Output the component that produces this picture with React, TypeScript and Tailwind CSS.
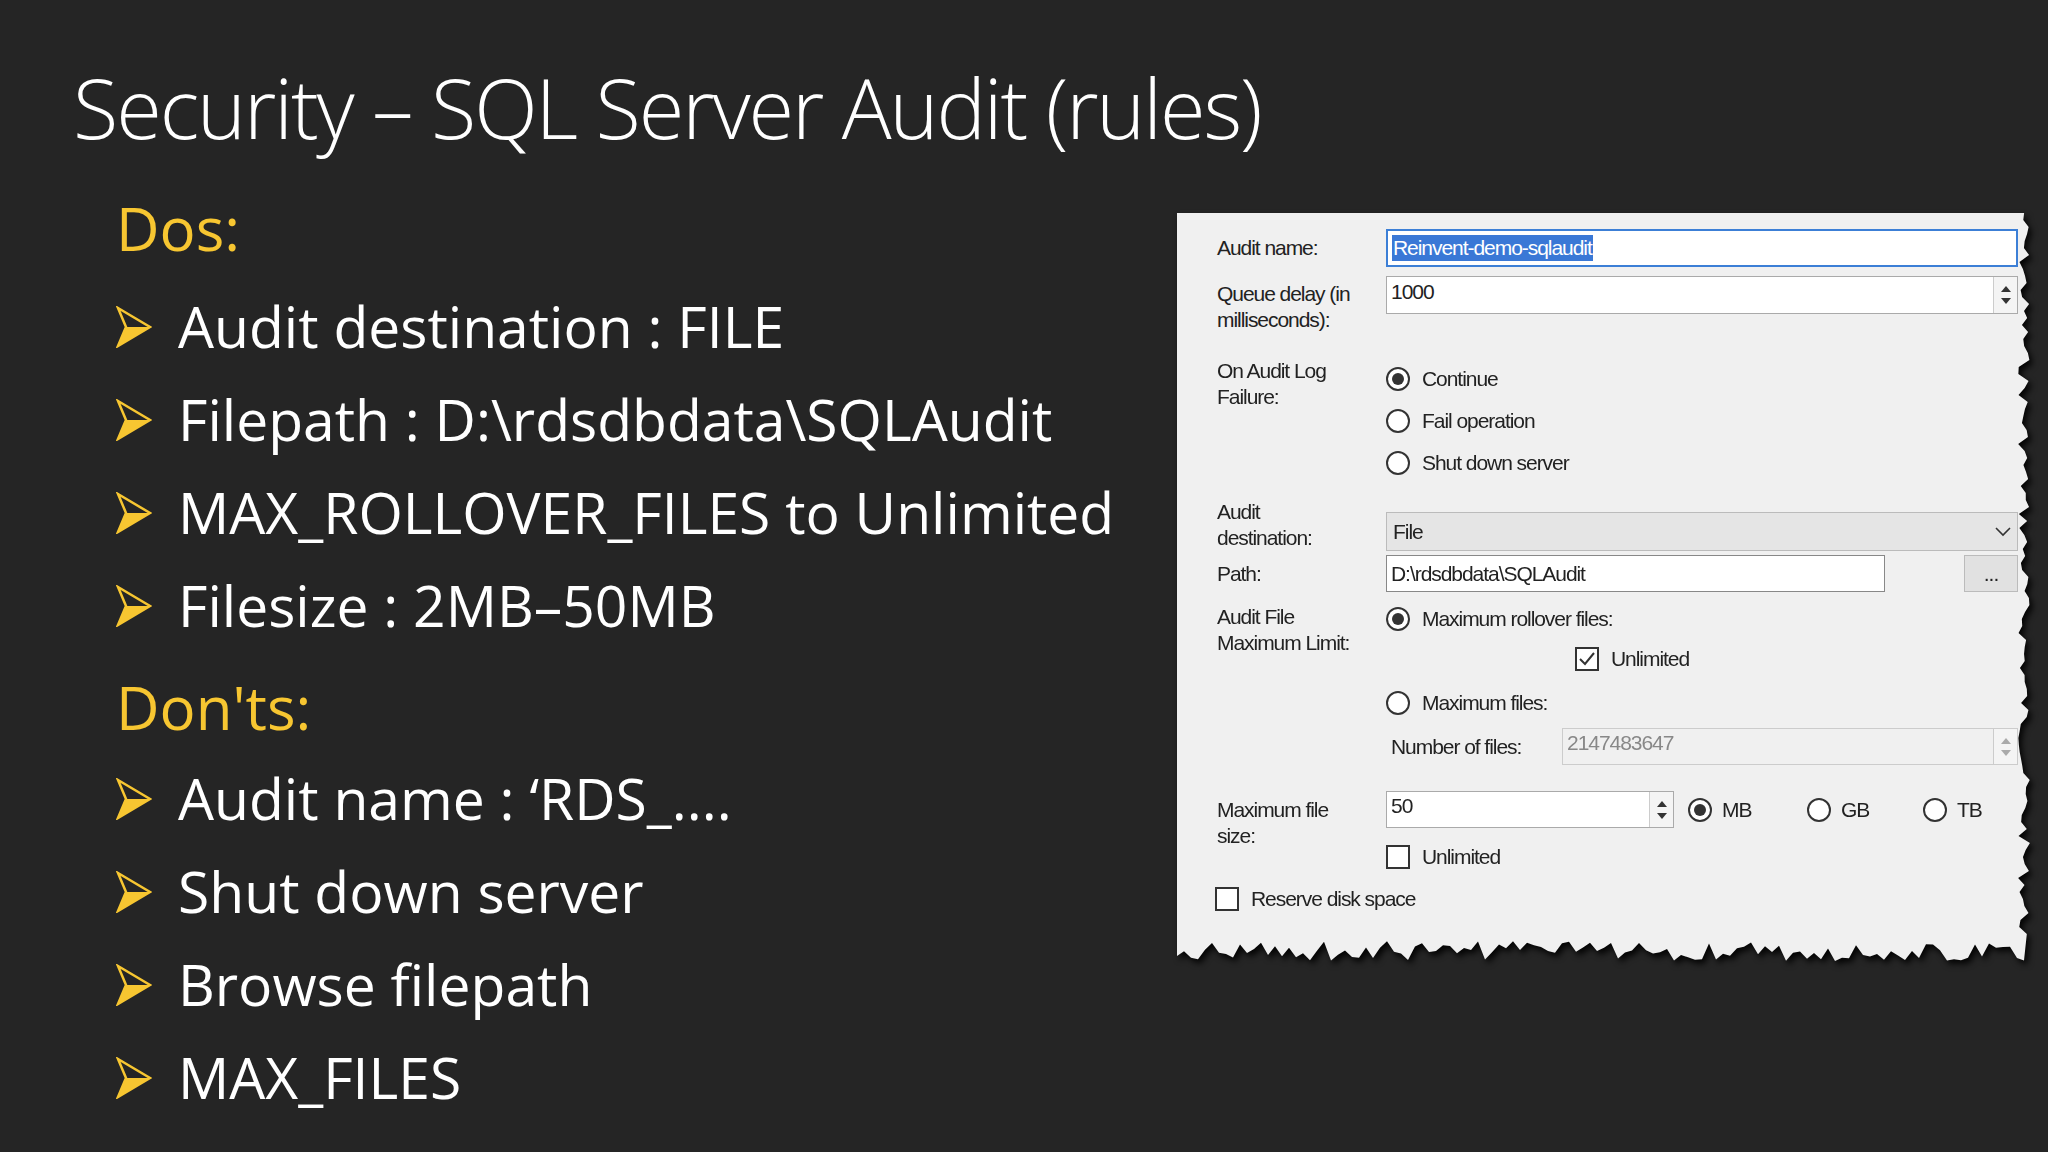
import React from "react";

const YELLOW = "#f7c631";

function Arrow() {
  return (
    <svg width="36" height="42" viewBox="0 0 36 42" className="shrink-0">
      <path d="M2 2 L34 21 L2 40 L10 21 Z" fill="none" stroke={YELLOW} strokeWidth="2.5" strokeLinejoin="miter" />
      <path d="M10 21 L34 21 L2 40 Z" fill={YELLOW} />
    </svg>
  );
}

function Bullet({ text }: { text: string }) {
  return (
    <div className="flex items-center h-[93px] gap-[26px]">
      <Arrow />
      <span className="text-[57px] text-white leading-none">{text}</span>
    </div>
  );
}

function Radio({ on }: { on?: boolean }) {
  return (
    <span className="w-[24px] h-[24px] rounded-full border-[2px] border-[#333] bg-white flex items-center justify-center shrink-0">
      {on && <span className="w-[12px] h-[12px] rounded-full bg-[#333]" />}
    </span>
  );
}

function Check({ on }: { on?: boolean }) {
  return (
    <span className="w-[24px] h-[24px] border-[2px] border-[#333] bg-white flex items-center justify-center shrink-0">
      {on && (
        <svg width="18" height="18" viewBox="0 0 18 18">
          <path d="M2 9 L7 14 L16 3" fill="none" stroke="#333" strokeWidth="2" />
        </svg>
      )}
    </span>
  );
}

function Spinner({ dim }: { dim?: boolean }) {
  const c = dim ? "#aaa" : "#333";
  return (
    <span className="w-[24px] h-full border-l border-[#ccc] flex flex-col items-center justify-center gap-[6px] bg-[#f4f4f4]">
      <svg width="10" height="6" viewBox="0 0 10 6"><path d="M0 6 L5 0 L10 6Z" fill={c} /></svg>
      <svg width="10" height="6" viewBox="0 0 10 6"><path d="M0 0 L5 6 L10 0Z" fill={c} /></svg>
    </span>
  );
}

// jagged torn edge on right and bottom
function tornClip(w: number, h: number) {
  let seed = 7;
  const rnd = () => {
    seed = (seed * 9301 + 49297) % 233280;
    return seed / 233280;
  };
  const pts: string[] = ["0px 0px"];
  for (let y = 0; y <= h - 30; y += 7) pts.push(`${w - 4 - rnd() * 12}px ${y}px`);
  for (let x = w - 10; x >= 0; x -= 7) pts.push(`${x}px ${h - 6 - rnd() * 20}px`);
  pts.push(`0px ${h - 10}px`);
  return `polygon(${pts.join(",")})`;
}

function Dialog() {
  const W = 857;
  const H = 754;
  return (
    <div className="w-[857px] h-[754px] [filter:drop-shadow(3px_4px_3px_rgba(0,0,0,0.9))]">
      <div
        className="w-full h-full bg-[#f0f0f0] text-[#222] text-[21px] tracking-[-0.05em] leading-[26px] relative"
        style={{ clipPath: tornClip(W, H), fontFamily: '"Liberation Sans", Arial, sans-serif' }}
      >
        <div className="pl-[40px] pr-[16px] pt-[16px] flex flex-col">
          {/* Audit name */}
          <div className="flex h-[38px] items-center">
            <span className="w-[169px]">Audit name:</span>
            <div className="flex-1 h-[38px] border-[2px] border-[#3c7fd6] bg-white flex items-center px-[4px]">
              <span className="bg-[#3a78d6] text-white px-[1px]">Reinvent-demo-sqlaudit</span>
            </div>
          </div>
          {/* Queue delay */}
          <div className="flex mt-[9px] h-[80px]">
            <span className="w-[169px] pt-[5px]">Queue delay (in<br />milliseconds):</span>
            <div className="flex-1 h-[38px] border border-[#aaa] bg-white flex">
              <span className="flex-1 px-[4px] pt-[2px]">1000</span>
              <Spinner />
            </div>
          </div>
          {/* Audit log failure */}
          <div className="flex h-[126px] mt-[2px]">
            <span className="w-[169px]">On Audit Log<br />Failure:</span>
            <div className="flex flex-col">
              {["Continue", "Fail operation", "Shut down server"].map((t, i) => (
                <div key={t} className="flex items-center gap-[12px] h-[42px]">
                  <Radio on={i === 0} />
                  <span>{t}</span>
                </div>
              ))}
            </div>
          </div>
          {/* Destination */}
          <div className="flex h-[40px] mt-[27px] items-end">
            <span className="w-[169px] leading-[26px]">Audit<br />destination:</span>
            <div className="flex-1 h-[39px] border border-[#bbb] bg-[#e5e5e5] flex items-center px-[6px] justify-between">
              <span>File</span>
              <svg width="16" height="10" viewBox="0 0 16 10"><path d="M1 1 L8 8 L15 1" fill="none" stroke="#333" strokeWidth="1.6" /></svg>
            </div>
          </div>
          {/* Path */}
          <div className="flex h-[37px] mt-[4px] items-center">
            <span className="w-[169px] shrink-0">Path:</span>
            <div className="w-[499px] shrink-0 h-[37px] border border-[#888] bg-white flex items-center px-[4px]">D:\rdsdbdata\SQLAudit</div>
            <div className="ml-auto w-[54px] h-[37px] border border-[#bbb] bg-[#e1e1e1] flex items-center justify-center">...</div>
          </div>
          {/* Audit file limit */}
          <div className="flex mt-[12px]">
            <span className="w-[169px]">Audit File<br />Maximum Limit:</span>
            <div className="flex-1 flex flex-col">
              <div className="flex items-center gap-[12px] h-[30px]">
                <Radio on />
                <span>Maximum rollover files:</span>
              </div>
              <div className="flex items-center gap-[12px] h-[30px] mt-[10px] ml-[189px]">
                <Check on />
                <span>Unlimited</span>
              </div>
              <div className="flex items-center gap-[12px] h-[30px] mt-[14px]">
                <Radio />
                <span>Maximum files:</span>
              </div>
            </div>
          </div>
          <div className="flex items-center h-[37px] mt-[10px] ml-[174px]">
            <span className="w-[171px]">Number of files:</span>
            <div className="flex-1 h-[37px] border border-[#ccc] bg-[#f0f0f0] flex text-[#888]">
              <span className="flex-1 px-[4px] pt-[1px]">2147483647</span>
              <Spinner dim />
            </div>
          </div>
          {/* Max file size */}
          <div className="flex mt-[26px]">
            <span className="w-[169px] pt-[6px]">Maximum file<br />size:</span>
            <div className="flex flex-col">
              <div className="flex items-center h-[37px]">
                <div className="w-[288px] h-[37px] border border-[#aaa] bg-white flex">
                  <span className="flex-1 px-[4px] pt-[1px]">50</span>
                  <Spinner />
                </div>
                <div className="flex items-center gap-[10px] ml-[14px] w-[119px]"><Radio on /><span>MB</span></div>
                <div className="flex items-center gap-[10px] w-[116px]"><Radio /><span>GB</span></div>
                <div className="flex items-center gap-[10px]"><Radio /><span>TB</span></div>
              </div>
              <div className="flex items-center gap-[12px] h-[30px] mt-[14px]">
                <Check />
                <span>Unlimited</span>
              </div>
            </div>
          </div>
          <div className="flex items-center gap-[12px] h-[30px] mt-[12px] ml-[-2px]">
            <Check />
            <span>Reserve disk space</span>
          </div>
        </div>
      </div>
    </div>
  );
}

export default function App() {
  return (
    <div
      className="w-[2048px] h-[1152px] bg-[#252525] overflow-hidden relative"
      style={{ fontFamily: '"Open Sans", "Noto Sans", sans-serif' }}
    >
      <div className="pl-[73px] pt-[52px]">
        <h1 className="text-[83px] font-light text-white leading-[110px] tracking-[-0.025em]">
          Security – SQL Server Audit (rules)
        </h1>
      </div>
      <div className="flex">
        <div className="pl-[116px] pt-[26px] flex flex-col w-[1177px]">
          <div className="text-[60px] leading-[80px] text-[#f7c631]">Dos:</div>
          <div className="h-[12px]" />
          <Bullet text="Audit destination : FILE" />
          <Bullet text="Filepath : D:\rdsdbdata\SQLAudit" />
          <Bullet text="MAX_ROLLOVER_FILES to Unlimited" />
          <Bullet text="Filesize : 2MB–50MB" />
          <div className="text-[60px] leading-[90px] text-[#f7c631] mt-[10px]">Don'ts:</div>
          <Bullet text="Audit name : ‘RDS_...." />
          <Bullet text="Shut down server" />
          <Bullet text="Browse filepath" />
          <Bullet text="MAX_FILES" />
        </div>
        <div className="pt-[51px]">
          <Dialog />
        </div>
      </div>
    </div>
  );
}
